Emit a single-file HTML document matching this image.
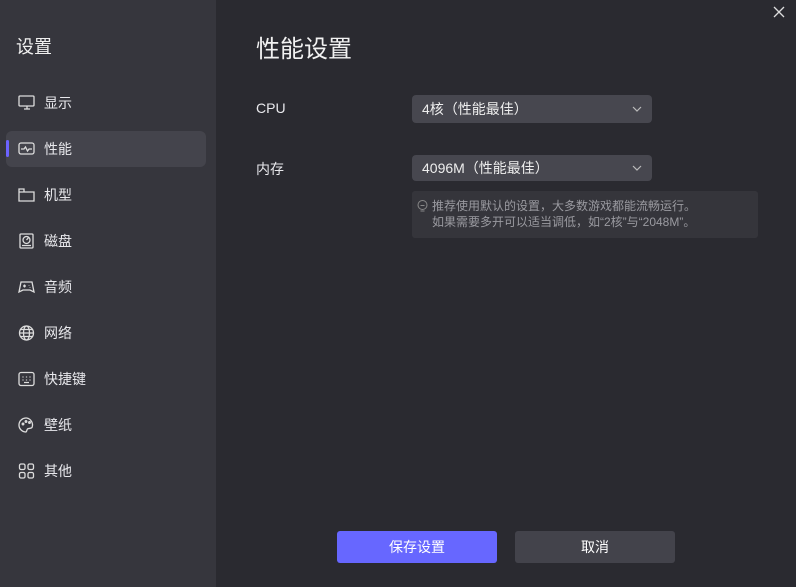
<!DOCTYPE html>
<html><head><meta charset="utf-8"><style>
*{margin:0;padding:0;box-sizing:border-box}
body{width:796px;height:587px;background:#2a2a30;font-family:"Liberation Sans","Noto Sans CJK SC",sans-serif;color:#e8e8ec;position:relative;overflow:hidden}
.side{position:absolute;left:0;top:0;width:216px;height:587px;background:#36363d}
.st{position:absolute;left:16px;top:33px;font-size:18px;color:#f0f0f0}
.item{position:absolute;left:6px;width:200px;height:36px;font-size:14px;line-height:36px;padding-left:38px}
.item svg{position:absolute;left:12px;top:10px}
.sel{background:#44444c;border-radius:6px}
.sel:before{content:"";position:absolute;left:0;top:9px;width:3px;height:17px;background:#6c63ff;border-radius:2px}
.abs{position:absolute}
.selb{position:absolute;left:412px;width:240px;background:#47474f;border-radius:4px;font-size:14px;padding-left:10px;color:#eee}
.chev{position:absolute;right:10px;top:10px}
.btn{position:absolute;top:531px;width:160px;height:32px;border-radius:3px;font-size:14px;text-align:center;line-height:32px;color:#fff}
</style></head><body>
<div class="side">
<div class="st">设置</div>
<div class="item" style="top:85px"><svg width="18" height="16" viewBox="0 0 18 16" fill="none" stroke="#ddd" stroke-width="1.3"><rect x="1" y="1" width="15" height="10" rx="1"/><path d="M6 14h6M9 11v3"/></svg>显示</div>
<div class="item sel" style="top:131px"><svg width="18" height="16" viewBox="0 0 18 16" fill="none" stroke="#ddd" stroke-width="1.3"><rect x="1" y="2" width="15" height="11" rx="2"/><path d="M3 8h3l1.5-2 2 4 1.5-2h3"/></svg>性能</div>
<div class="item" style="top:177px"><svg width="18" height="16" viewBox="0 0 18 16" fill="none" stroke="#ddd" stroke-width="1.3"><path d="M1 2h5v3h10v9H1z M1 5h5"/></svg>机型</div>
<div class="item" style="top:223px"><svg width="18" height="16" viewBox="0 0 18 16" fill="none" stroke="#ddd" stroke-width="1.3"><rect x="2" y="1" width="13" height="14" rx="1"/><circle cx="8.5" cy="7" r="3.5"/><path d="M8.5 7l2.5-3M4 12.5h9"/></svg>磁盘</div>
<div class="item" style="top:269px"><svg width="18" height="16" viewBox="0 0 18 16" fill="none" stroke="#ddd" stroke-width="1.3"><path d="M3 3h11l2 10-4-2H5l-4 2z"/><path d="M5 7h3M6.5 5.5v3M11 6v.5M12 8v.5"/></svg>音频</div>
<div class="item" style="top:315px"><svg width="18" height="16" viewBox="0 0 18 16" fill="none" stroke="#ddd" stroke-width="1.3"><circle cx="8.5" cy="8" r="7"/><ellipse cx="8.5" cy="8" rx="3" ry="7"/><path d="M1.5 8h14M2.5 4.5h12M2.5 11.5h12"/></svg>网络</div>
<div class="item" style="top:361px"><svg width="18" height="16" viewBox="0 0 18 16" fill="none" stroke="#ddd" stroke-width="1.3"><rect x="1" y="1.5" width="15" height="13" rx="2"/><path d="M5 5.5v1M8.5 5.5v1M12 5.5v1M5 8.5v1M8.5 8.5v1M12 8.5v1M6 11.5h5"/></svg>快捷键</div>
<div class="item" style="top:407px"><svg width="18" height="16" viewBox="0 0 18 16" fill="none" stroke="#ddd" stroke-width="1.3"><path d="M8.5 1a7 7 0 0 0-1 14c1.5 0 1-2 2-3s3 0 4.5-1.5A7 7 0 0 0 8.5 1z"/><circle cx="5" cy="7" r=".8"/><circle cx="8" cy="4.5" r=".8"/><circle cx="11.5" cy="5.5" r=".8"/></svg>壁纸</div>
<div class="item" style="top:453px"><svg width="18" height="16" viewBox="0 0 18 16" fill="none" stroke="#ddd" stroke-width="1.3"><rect x="1.5" y="1" width="5.5" height="5.5" rx="1.5"/><rect x="10" y="1" width="5.5" height="5.5" rx="1.5"/><rect x="1.5" y="9.5" width="5.5" height="5.5" rx="1.5"/><rect x="10" y="9.5" width="5.5" height="5.5" rx="1.5"/></svg>其他</div>
</div>
<svg class="abs" style="left:773px;top:6px" width="12" height="12" viewBox="0 0 12 12" stroke="#ddd" stroke-width="1.3"><path d="M1 1l10 10M11 1L1 11"/></svg>
<div class="abs" style="left:256px;top:29px;font-size:24px;color:#f2f2f2">性能设置</div>
<div class="abs" style="left:256px;top:100px;font-size:14px">CPU</div>
<div class="abs" style="left:256px;top:159px;font-size:14px">内存</div>
<div class="selb" style="top:95px;height:28px;line-height:28px">4核（性能最佳）<svg class="chev" width="10" height="6" viewBox="0 0 10 6" fill="none" stroke="#bbb" stroke-width="1.2" style="top:11px"><path d="M1 1l4 4 4-4"/></svg></div>
<div class="selb" style="top:155px;height:26px;line-height:26px">4096M（性能最佳）<svg class="chev" width="10" height="6" viewBox="0 0 10 6" fill="none" stroke="#bbb" stroke-width="1.2"><path d="M1 1l4 4 4-4"/></svg></div>
<div class="abs" style="left:412px;top:191px;width:346px;height:47px;background:#35353b;border-radius:3px;font-size:12px;color:#9a9aa0;line-height:15.5px;padding:8px 0 0 20px">
<svg class="abs" style="left:5px;top:9px" width="11" height="13" viewBox="0 0 11 13" fill="none" stroke="#888" stroke-width="1"><circle cx="5.5" cy="5" r="4.5"/><path d="M3.5 11h4M3.5 5.5h4"/></svg>
推荐使用默认的设置，大多数游戏都能流畅运行。<br>如果需要多开可以适当调低，如“2核”与“2048M”。</div>
<div class="btn" style="left:337px;background:#6767ff">保存设置</div>
<div class="btn" style="left:515px;background:#43434b">取消</div>
</body></html>
